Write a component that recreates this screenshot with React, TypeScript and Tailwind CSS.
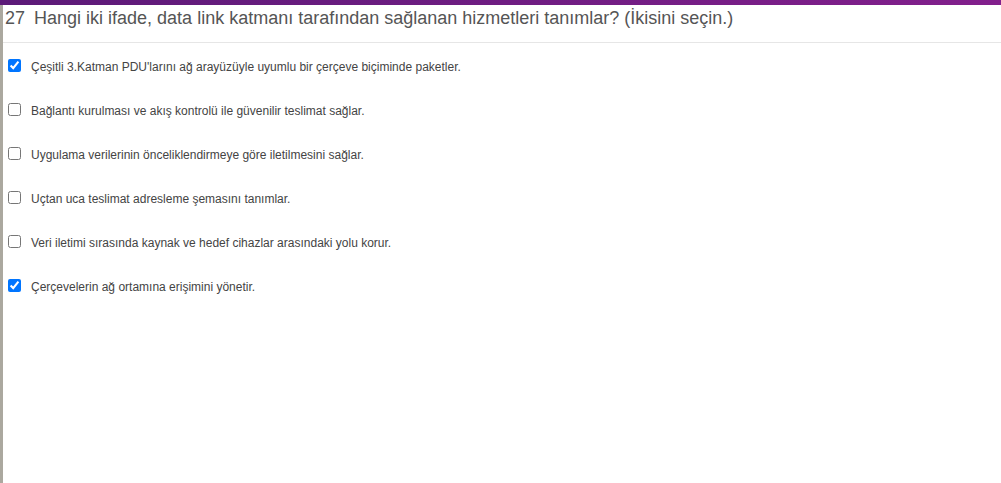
import React, { useState } from 'react';

const options = [
  { text: "Çeşitli 3.Katman PDU'larını ağ arayüzüyle uyumlu bir çerçeve biçiminde paketler.", checked: true },
  { text: 'Bağlantı kurulması ve akış kontrolü ile güvenilir teslimat sağlar.', checked: false },
  { text: 'Uygulama verilerinin önceliklendirmeye göre iletilmesini sağlar.', checked: false },
  { text: 'Uçtan uca teslimat adresleme şemasını tanımlar.', checked: false },
  { text: 'Veri iletimi sırasında kaynak ve hedef cihazlar arasındaki yolu korur.', checked: false },
  { text: 'Çerçevelerin ağ ortamına erişimini yönetir.', checked: true },
];

export default function App() {
  const [checked, setChecked] = useState(options.map(o => o.checked));

  return (
    <div className="w-[1001px] h-[483px] bg-white overflow-hidden flex flex-col font-['Liberation_Sans',Arial,sans-serif]">
      {/* top accent bar */}
      <div className="h-[5px] w-full bg-gradient-to-r from-[#5c1a78] to-[#821f8c]" />
      <div className="flex-1 flex">
        <div className="w-[3px] bg-[#aba89f]" />
        <div className="flex-1 flex flex-col">
          <div className="h-[38px] flex items-start pt-[4px] pl-[2px] border-b border-[#e6e6e6] text-[18px] text-[#555] leading-[18px]">
            <span>27</span>
            <span className="ml-[9px]">Hangi iki ifade, data link katmanı tarafından sağlanan hizmetleri tanımlar? (İkisini seçin.)</span>
          </div>
          <div className="flex flex-col pt-[14px]">
            {options.map((opt, i) => (
              <label key={i} className="h-[44px] flex items-start pl-[5px]">
                <input
                  type="checkbox"
                  checked={checked[i]}
                  onChange={() => setChecked(prev => prev.map((c, j) => (j === i ? !c : c)))}
                  className="w-[13px] h-[13px] m-0 mt-[2px] accent-[#0075ff]"
                />
                <span className="ml-[10px] text-[12px] text-[#444] leading-[19px] pt-[1px]">{opt.text}</span>
              </label>
            ))}
          </div>
        </div>
      </div>
    </div>
  );
}
